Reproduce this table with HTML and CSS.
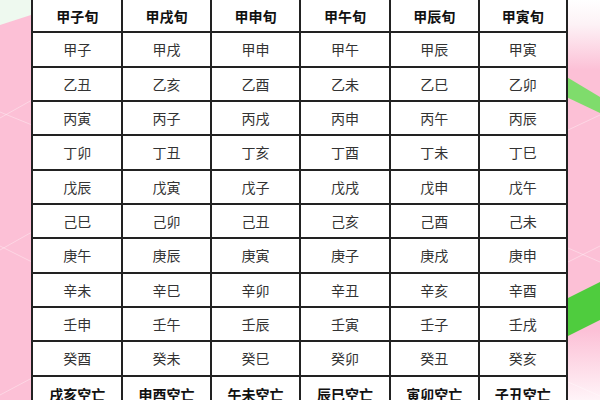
FILE: index.html
```html
<!DOCTYPE html>
<html lang="zh-CN">
<head>
<meta charset="utf-8">
<title>六甲旬空亡表</title>
<link rel="stylesheet" href="styles.css">
</head>
<body>
<svg class="backdrop" width="600" height="400" viewBox="0 0 600 400" aria-hidden="true">
  <defs>
    <linearGradient id="topfade" x1="0" y1="0" x2="0" y2="1">
      <stop offset="0" stop-color="#ffffff"/>
      <stop offset="0.35" stop-color="#fdf2f6"/>
      <stop offset="1" stop-color="#fcc0d6"/>
    </linearGradient>
    <linearGradient id="botfade" x1="0" y1="0" x2="0" y2="1">
      <stop offset="0" stop-color="#fcc0d6"/>
      <stop offset="1" stop-color="#fff4f8"/>
    </linearGradient>
  </defs>
  <rect x="0" y="0" width="600" height="400" fill="#fcc0d6"/>
  <polygon points="0,0 34,0 34,14 0,25" fill="#eef9ef"/>
  <rect x="560" y="0" width="40" height="70" fill="url(#topfade)"/>
  <rect x="560" y="330" width="40" height="70" fill="url(#botfade)"/>
  <polygon points="560,73 600,97 600,113 560,94" fill="#7fdc6c"/>
  <polygon points="560,302 600,282 600,320 560,340" fill="#4fcc3e"/>
  <g stroke="#ffffff" stroke-opacity="0.35" stroke-width="1" fill="none">
    <line x1="0" y1="118" x2="32" y2="100"/>
    <line x1="0" y1="112" x2="32" y2="125"/>
    <line x1="0" y1="250" x2="32" y2="232"/>
    <line x1="0" y1="246" x2="32" y2="262"/>
    <line x1="0" y1="395" x2="32" y2="378"/>
    <line x1="568" y1="130" x2="600" y2="115"/>
    <line x1="568" y1="248" x2="600" y2="262"/>
    <line x1="568" y1="262" x2="600" y2="246"/>
    <line x1="568" y1="382" x2="600" y2="396"/>
  </g>
</svg>
<div class="grid">
  <div class="cell head">甲子旬</div><div class="cell head">甲戌旬</div><div class="cell head">甲申旬</div><div class="cell head">甲午旬</div><div class="cell head">甲辰旬</div><div class="cell head">甲寅旬</div>
  <div class="cell">甲子</div><div class="cell">甲戌</div><div class="cell">甲申</div><div class="cell">甲午</div><div class="cell">甲辰</div><div class="cell">甲寅</div>
  <div class="cell">乙丑</div><div class="cell">乙亥</div><div class="cell">乙酉</div><div class="cell">乙未</div><div class="cell">乙巳</div><div class="cell">乙卯</div>
  <div class="cell">丙寅</div><div class="cell">丙子</div><div class="cell">丙戌</div><div class="cell">丙申</div><div class="cell">丙午</div><div class="cell">丙辰</div>
  <div class="cell">丁卯</div><div class="cell">丁丑</div><div class="cell">丁亥</div><div class="cell">丁酉</div><div class="cell">丁未</div><div class="cell">丁巳</div>
  <div class="cell">戊辰</div><div class="cell">戊寅</div><div class="cell">戊子</div><div class="cell">戊戌</div><div class="cell">戊申</div><div class="cell">戊午</div>
  <div class="cell">己巳</div><div class="cell">己卯</div><div class="cell">己丑</div><div class="cell">己亥</div><div class="cell">己酉</div><div class="cell">己未</div>
  <div class="cell">庚午</div><div class="cell">庚辰</div><div class="cell">庚寅</div><div class="cell">庚子</div><div class="cell">庚戌</div><div class="cell">庚申</div>
  <div class="cell">辛未</div><div class="cell">辛巳</div><div class="cell">辛卯</div><div class="cell">辛丑</div><div class="cell">辛亥</div><div class="cell">辛酉</div>
  <div class="cell">壬申</div><div class="cell">壬午</div><div class="cell">壬辰</div><div class="cell">壬寅</div><div class="cell">壬子</div><div class="cell">壬戌</div>
  <div class="cell">癸酉</div><div class="cell">癸未</div><div class="cell">癸巳</div><div class="cell">癸卯</div><div class="cell">癸丑</div><div class="cell">癸亥</div>
  <div class="cell head">戌亥空亡</div><div class="cell head">申酉空亡</div><div class="cell head">午未空亡</div><div class="cell head">辰巳空亡</div><div class="cell head">寅卯空亡</div><div class="cell head">子丑空亡</div>
</div>
</body>
</html>
```

FILE: styles.css
```css
html, body {
  margin: 0;
  padding: 0;
}
body {
  width: 600px;
  height: 400px;
  overflow: hidden;
  position: relative;
  background: #fcc0d6;
  font-family: "Noto Sans CJK SC", "Noto Sans", sans-serif;
}
.backdrop {
  position: absolute;
  left: 0;
  top: 0;
  z-index: 0;
}
.grid {
  position: relative;
  z-index: 1;
  margin: -3px 0 0 31px;
  width: 537px;
  box-sizing: border-box;
  display: grid;
  grid-template-columns: 90.4px 88.3px 89.7px 89.3px 89px 88.3px;
  grid-auto-rows: 34.33px;
  background: #ffffff;
  border-left: 2px solid #222222;
  border-top: 2px solid #222222;
}
.cell {
  box-sizing: border-box;
  border-right: 2px solid #222222;
  border-bottom: 2px solid #222222;
  display: flex;
  align-items: center;
  justify-content: center;
  font-size: 14px;
  color: #333333;
  line-height: 1;
}
.head {
  font-weight: bold;
  color: #111111;
  padding-top: 2px;
}
```
